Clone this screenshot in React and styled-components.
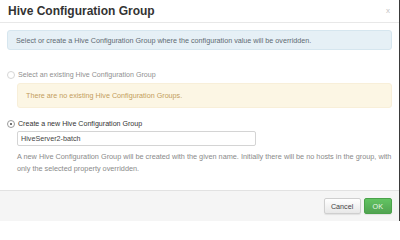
import styled, { createGlobalStyle } from "styled-components";

const GlobalStyle = createGlobalStyle`
  html, body {
    margin: 0;
    padding: 0;
    background: #ffffff;
  }
  body {
    font-family: "Liberation Sans", Arial, sans-serif;
    -webkit-font-smoothing: antialiased;
  }
`;

const Modal = styled.div`
  width: 400px;
  height: 221px;
  box-sizing: border-box;
  display: flex;
  flex-direction: column;
  background: #fff;
  border-right: 1px solid #3a3a3a;
  overflow: hidden;
`;

const Header = styled.div`
  height: 22px;
  flex: none;
  display: flex;
  align-items: center;
  justify-content: space-between;
  padding: 0 9px 0 8px;
  border-bottom: 1px solid #e8e8e8;
`;

const Title = styled.h3`
  margin: 0;
  font-size: 12px;
  font-weight: bold;
  color: #333;
  line-height: 22px;
`;

const Close = styled.span`
  font-size: 8px;
  color: #c4c4c4;
  line-height: 1;
`;

const Body = styled.div`
  flex: 1;
  padding: 7px 7px 0 7px;
`;

const Alert = styled.div`
  box-sizing: border-box;
  height: ${(p) => (p.$tall ? "25px" : "20px")};
  margin-left: ${(p) => (p.$indent ? "10px" : "0")};
  padding: 0 8px;
  display: flex;
  align-items: center;
  font-size: 7.2px;
  border-radius: 3px;
  background: ${(p) => (p.$kind === "warning" ? "#fcf6e4" : "#e6f0f6")};
  border: 1px solid ${(p) => (p.$kind === "warning" ? "#f8efd9" : "#d6e6ef")};
  color: ${(p) => (p.$kind === "warning" ? "#c39d5c" : "#5f6b73")};
`;

const RadioRow = styled.label`
  display: flex;
  align-items: center;
  gap: 3px;
  height: 10px;
  margin-top: ${(p) => p.$top}px;
  font-size: 7.1px;
  color: ${(p) => (p.$disabled ? "#8f8f8f" : "#333")};
`;

const Radio = styled.span`
  width: 6px;
  height: 6px;
  border-radius: 50%;
  border: 1px solid ${(p) => (p.$disabled ? "#d6d6d6" : "#9a9a9a")};
  background: #fff;
  display: flex;
  align-items: center;
  justify-content: center;
  flex: none;

  &::after {
    content: "";
    width: 2px;
    height: 2px;
    border-radius: 50%;
    background: ${(p) => (p.$checked ? "#444" : "transparent")};
  }
`;

const Warning = styled(Alert)`
  margin-top: 3px;
`;

const Indented = styled.div`
  margin-left: 10px;
`;

const Input = styled.input`
  display: block;
  box-sizing: border-box;
  width: 239px;
  height: 15px;
  margin-top: 2px;
  padding: 0 3px;
  border: 1px solid #d4d4d4;
  border-radius: 2px;
  font-family: "Liberation Sans", Arial, sans-serif;
  font-size: 7.2px;
  color: #444;
  outline: none;
`;

const Help = styled.p`
  margin: 5px 0 0 0;
  font-size: 7.3px;
  line-height: 12px;
  color: #8a8a8a;
`;

const Footer = styled.div`
  height: 31px;
  flex: none;
  box-sizing: border-box;
  border-top: 1px solid #e2e2e2;
  background: #f5f5f5;
  display: flex;
  justify-content: flex-end;
  align-items: flex-start;
  gap: 3px;
  padding: 7px 7px 0 0;
`;

const Button = styled.button`
  box-sizing: border-box;
  height: 16px;
  padding: 0 ${(p) => (p.$primary ? "8px" : "6px")};
  min-width: ${(p) => (p.$primary ? "25px" : "37px")};
  font-family: "Liberation Sans", Arial, sans-serif;
  font-size: 7.2px;
  border-radius: 2px;
  border: 1px solid ${(p) => (p.$primary ? "#4aa24a" : "#cfcfcf")};
  color: ${(p) => (p.$primary ? "#e9f6e9" : "#444")};
  background: ${(p) =>
    p.$primary
      ? "linear-gradient(#62c462, #51a351)"
      : "linear-gradient(#ffffff, #e8e8e8)"};
  box-shadow: 0 1px 1px rgba(0, 0, 0, 0.08);
`;

function App() {
  return (
    <>
      <GlobalStyle />
      <Modal>
        <Header>
          <Title>Hive Configuration Group</Title>
          <Close>x</Close>
        </Header>
        <Body>
          <Alert $kind="info">
            Select or create a Hive Configuration Group where the configuration
            value will be overridden.
          </Alert>
          <RadioRow $top={20} $disabled>
            <Radio $disabled />
            Select an existing Hive Configuration Group
          </RadioRow>
          <Warning $kind="warning" $tall $indent>
            There are no existing Hive Configuration Groups.
          </Warning>
          <RadioRow $top={11}>
            <Radio $checked />
            Create a new Hive Configuration Group
          </RadioRow>
          <Indented>
            <Input defaultValue="HiveServer2-batch" />
            <Help>
              A new Hive Configuration Group will be created with the given
              name. Initially there will be no hosts in the group, with only the
              selected property overridden.
            </Help>
          </Indented>
        </Body>
        <Footer>
          <Button>Cancel</Button>
          <Button $primary>OK</Button>
        </Footer>
      </Modal>
    </>
  );
}

export default App;
